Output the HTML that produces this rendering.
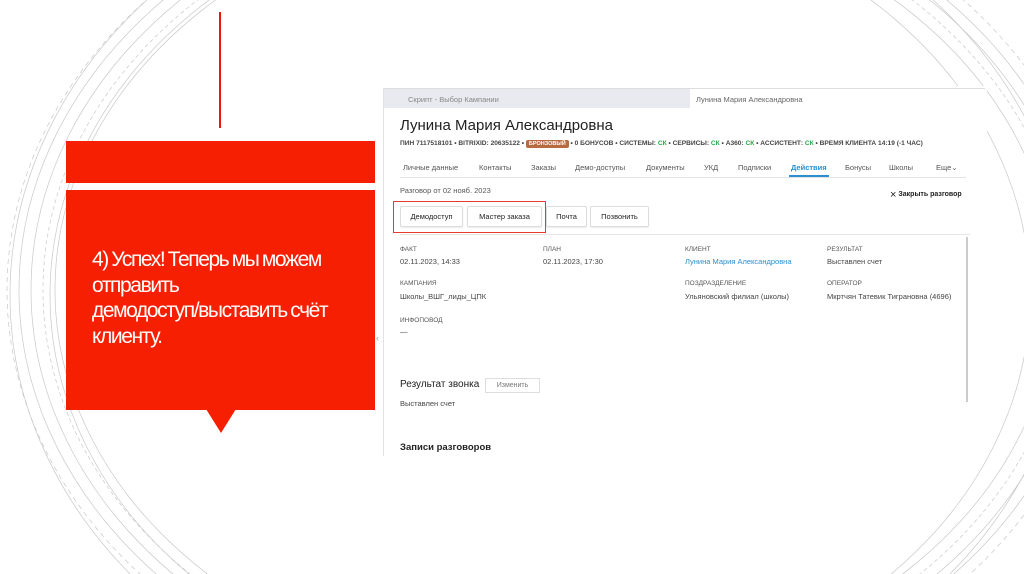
<!DOCTYPE html>
<html><head><meta charset="utf-8"><style>
*{margin:0;padding:0;box-sizing:border-box}
html,body{width:1024px;height:574px;overflow:hidden}
body{background:#fff;position:relative;font-family:"Liberation Sans","Noto Sans CJK SC",sans-serif}
.a{position:absolute;white-space:nowrap}
.s{font-size:7.5px;color:#333}
.lbl{font-size:6.5px;color:#555}
.val{font-size:7.5px;color:#444}
.btn{position:absolute;top:206px;height:21px;border:1px solid #ddd;border-radius:2px;background:#fff;font-size:7.5px;color:#222;text-align:center;line-height:19px;box-shadow:0 1px 1px rgba(0,0,0,.08)}
</style></head><body>
<svg class="a" style="left:0;top:0;display:block" width="1024" height="574">
<g fill="none" stroke="#c8c8c8" stroke-width="0.7">
<ellipse cx="555" cy="290" rx="500" ry="395"/>
<ellipse cx="555" cy="290" rx="512" ry="405" stroke-dasharray="4 3"/>
<ellipse cx="555" cy="290" rx="524" ry="415"/>
<ellipse cx="555" cy="290" rx="536" ry="425"/>
<ellipse cx="555" cy="290" rx="548" ry="435" stroke-dasharray="5 4"/>
<ellipse cx="540" cy="295" rx="490" ry="400"/>
<ellipse cx="540" cy="295" rx="530" ry="440"/>
</g>
</svg>
<div class="a" style="left:383px;top:86px;width:604px;height:372px;background:#fff"></div>
<div class="a" style="left:219px;top:12px;width:2px;height:116px;background:#e8180a"></div>
<div class="a" style="left:66px;top:141px;width:309px;height:42px;background:#f71f02"></div>
<div class="a" style="left:66px;top:190px;width:309px;height:220px;background:#f71f02"></div>
<div class="a" style="left:206px;top:409px;width:0;height:0;border-left:15px solid transparent;border-right:15px solid transparent;border-top:24px solid #f71f02"></div>
<div class="a" style="left:92px;top:247px;color:#fff;font-size:21px;line-height:25.5px;letter-spacing:-1.4px;word-spacing:-1px">4) Успех! Теперь мы можем<br>отправить<br>демодоступ/выставить счёт<br>клиенту.</div>

<div class="a" style="left:383px;top:88px;width:602px;height:1px;background:#ddd"></div>
<div class="a" style="left:383px;top:89px;width:307px;height:19px;background:#e8eaef"></div>
<div class="a" style="left:383px;top:88px;width:1px;height:368px;background:#e2e2e2"></div>
<div class="a" style="left:376px;top:333px;font-size:9px;color:#8aa">‹</div>
<div class="a s" style="left:408px;top:95px;color:#888">Скрипт - Выбор Кампании</div>
<div class="a s" style="left:696px;top:95px;color:#666">Лунина Мария Александровна</div>
<div class="a" style="left:400px;top:117px;font-size:15px;color:#222">Лунина Мария Александровна</div>
<div class="a" style="left:400px;top:140px;font-size:6.6px;color:#444;font-weight:bold">ПИН 7117518101 • BITRIXID: 20635122 • <span style="background:#b86b3e;color:#fff;padding:1px 3px;border-radius:2px;font-size:5.5px">БРОНЗОВЫЙ</span> • 0 БОНУСОВ • СИСТЕМЫ: <span style="color:#2aa84a">СК</span> • СЕРВИСЫ: <span style="color:#2aa84a">СК</span> • А360: <span style="color:#2aa84a">СК</span> • АССИСТЕНТ: <span style="color:#2aa84a">СК</span> • ВРЕМЯ КЛИЕНТА 14:19 (-1 ЧАС)</div>
<div class="a s" style="left:403px;top:163px;color:#555">Личные данные</div>
<div class="a s" style="left:479px;top:163px;color:#555">Контакты</div>
<div class="a s" style="left:531px;top:163px;color:#555">Заказы</div>
<div class="a s" style="left:575px;top:163px;color:#555">Демо-доступы</div>
<div class="a s" style="left:646px;top:163px;color:#555">Документы</div>
<div class="a s" style="left:704px;top:163px;color:#555">УКД</div>
<div class="a s" style="left:738px;top:163px;color:#555">Подписки</div>
<div class="a s" style="left:791px;top:163px;color:#2a8fd0;font-weight:bold">Действия</div>
<div class="a s" style="left:845px;top:163px;color:#555">Бонусы</div>
<div class="a s" style="left:889px;top:163px;color:#555">Школы</div>
<div class="a s" style="left:936px;top:163px;color:#555">Еще⌄</div>
<div class="a" style="left:400px;top:177px;width:566px;height:1px;background:#e2e2e2"></div>
<div class="a" style="left:789px;top:175px;width:40px;height:2px;background:#2a8fd0"></div>
<div class="a s" style="left:400px;top:186px;color:#555">Разговор от 02 нояб. 2023</div>
<div class="a s" style="left:890px;top:189px;color:#222;font-weight:bold;font-size:7px"><span style="font-weight:normal;font-size:11px;vertical-align:-2px">×</span> Закрыть разговор</div>
<div class="btn" style="left:400px;width:63px">Демодоступ</div>
<div class="btn" style="left:467px;width:75px">Мастер заказа</div>
<div class="btn" style="left:546px;width:41px">Почта</div>
<div class="btn" style="left:590px;width:59px">Позвонить</div>
<div class="a" style="left:393px;top:201px;width:153px;height:32px;border:1px solid #e83a2e"></div>
<div class="a" style="left:400px;top:234px;width:570px;height:1px;background:#e6e6e6"></div>
<div class="a" style="left:966px;top:237px;width:2px;height:165px;background:#ccc"></div>
<div class="a lbl" style="left:400px;top:246px">ФАКТ</div>
<div class="a val" style="left:400px;top:257px">02.11.2023, 14:33</div>
<div class="a lbl" style="left:543px;top:246px">ПЛАН</div>
<div class="a val" style="left:543px;top:257px">02.11.2023, 17:30</div>
<div class="a lbl" style="left:685px;top:246px">КЛИЕНТ</div>
<div class="a val" style="left:685px;top:257px;color:#2a8fd0">Лунина Мария Александровна</div>
<div class="a lbl" style="left:827px;top:246px">РЕЗУЛЬТАТ</div>
<div class="a val" style="left:827px;top:257px">Выставлен счет</div>
<div class="a lbl" style="left:400px;top:280px">КАМПАНИЯ</div>
<div class="a val" style="left:400px;top:292px">Школы_ВШГ_лиды_ЦПК</div>
<div class="a lbl" style="left:685px;top:280px">ПОЗДРАЗДЕЛЕНИЕ</div>
<div class="a val" style="left:685px;top:292px">Ульяновский филиал (школы)</div>
<div class="a lbl" style="left:827px;top:280px">ОПЕРАТОР</div>
<div class="a val" style="left:827px;top:292px">Мкртчян Татевик Тиграновна (4696)</div>
<div class="a lbl" style="left:400px;top:317px">ИНФОПОВОД</div>
<div class="a val" style="left:400px;top:327px">—</div>
<div class="a" style="left:400px;top:379px;font-size:10px;color:#222">Результат звонка</div>
<div class="a" style="left:485px;top:378px;width:55px;height:15px;border:1px solid #ddd;font-size:7px;color:#777;text-align:center;line-height:13px">Изменить</div>
<div class="a val" style="left:400px;top:399px">Выставлен счет</div>
<div class="a" style="left:400px;top:442px;font-size:9.5px;color:#222;font-weight:bold">Записи разговоров</div>
</body></html>
